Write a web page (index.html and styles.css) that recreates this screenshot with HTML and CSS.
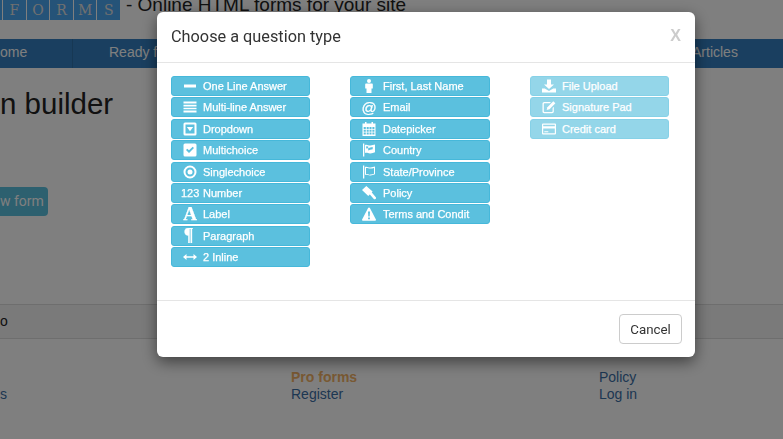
FILE: index.html
```html
<!DOCTYPE html>
<html lang="en">
<head>
    <meta charset="UTF-8">
    <meta name="viewport" content="width=device-width, initial-scale=1.0">
    <title>Online HTML forms for your site</title>
    <link rel="stylesheet" href="styles.css">
</head>
<body>
    <!-- page behind the dialog -->
    <div class="page">
        <header class="site-header">
            <div class="logo">
                <span class="logo-box logo-edge"></span>
                <span class="logo-box">F</span>
                <span class="logo-box">O</span>
                <span class="logo-box">R</span>
                <span class="logo-box">M</span>
                <span class="logo-box">S</span>
            </div>
            <div class="tagline">- Online HTML forms for your site</div>
        </header>

        <nav class="site-nav">
            <a class="nav-home">ome</a>
            <a class="nav-ready">Ready for</a>
            <a class="nav-articles">Articles</a>
        </nav>

        <h1 class="page-title">n builder</h1>
        <a class="new-form">w form</a>

        <div class="table-row">o</div>

        <footer class="site-footer">
            <span></span>
            <a class="pro">Pro forms</a>
            <a>Policy</a>
            <a>s</a>
            <a>Register</a>
            <a>Log in</a>
        </footer>
    </div>

    <div class="backdrop">
        <div class="modal">
            <div class="modal-header">
                <h4>Choose a question type</h4>
                <span class="close">X</span>
            </div>

            <div class="modal-body">
                <div class="type-col">
                    <a class="type-btn">
                        <span class="ico"><svg viewBox="0 0 14 14"><rect x="1" y="5.5" width="12" height="3"/></svg></span>
                        One Line Answer
                    </a>
                    <a class="type-btn">
                        <span class="ico"><svg viewBox="0 0 14 14"><path d="M.5 1.5h13v2H.5zM.5 4.8h13v1.6H.5zM.5 7.7h13v1.6H.5zM.5 10.6h13v2H.5z"/></svg></span>
                        Multi-line Answer
                    </a>
                    <a class="type-btn">
                        <span class="ico"><svg viewBox="0 0 14 14"><path fill-rule="evenodd" d="M2 .5h10A1.5 1.5 0 0 1 13.5 2v10a1.5 1.5 0 0 1-1.5 1.5H2A1.5 1.5 0 0 1 .5 12V2A1.5 1.5 0 0 1 2 .5zM2.5 2.5v9h9v-9z"/><path d="M3.8 5h6.4L7 9.3z"/></svg></span>
                        Dropdown
                    </a>
                    <a class="type-btn">
                        <span class="ico"><svg viewBox="0 0 14 14"><path fill-rule="evenodd" d="M2 .5h10A1.5 1.5 0 0 1 13.5 2v10a1.5 1.5 0 0 1-1.5 1.5H2A1.5 1.5 0 0 1 .5 12V2A1.5 1.5 0 0 1 2 .5zM3 7l1.3-1.3L6 7.3l3.7-3.6L11 5l-5 5z"/></svg></span>
                        Multichoice
                    </a>
                    <a class="type-btn">
                        <span class="ico"><svg viewBox="0 0 14 14"><path fill-rule="evenodd" d="M7 .5a6.5 6.5 0 1 1 0 13 6.5 6.5 0 0 1 0-13zM7 2.5a4.5 4.5 0 1 0 0 9 4.5 4.5 0 0 0 0-9z"/><circle cx="7" cy="7" r="2.5"/></svg></span>
                        Singlechoice
                    </a>
                    <a class="type-btn">
                        <span class="ico ico-text">123</span>
                        Number
                    </a>
                    <a class="type-btn">
                        <span class="ico ico-serif">A</span>
                        Label
                    </a>
                    <a class="type-btn">
                        <span class="ico ico-para">¶</span>
                        Paragraph
                    </a>
                    <a class="type-btn">
                        <span class="ico"><svg viewBox="0 0 14 14"><path d="M0 7l3.5-3v2.2h7V4L14 7l-3.5 3V7.8h-7V10z"/></svg></span>
                        2 Inline
                    </a>
                </div>

                <div class="type-col col-mid">
                    <a class="type-btn">
                        <span class="ico"><svg viewBox="0 0 14 14"><circle cx="7" cy="2" r="2"/><path d="M4 4.6h6a.8.8 0 0 1 .8.8v4.1H9.5V14h-5V9.5H3.2V5.4a.8.8 0 0 1 .8-.8z"/></svg></span>
                        First, Last Name
                    </a>
                    <a class="type-btn">
                        <span class="ico ico-at">@</span>
                        Email
                    </a>
                    <a class="type-btn">
                        <span class="ico"><svg viewBox="0 0 14 14"><path fill-rule="evenodd" d="M3 0h1.5v1.5h5V0H11v1.5h2.500V14H.5V1.500H3zM1.700 5v2h2.100V5zm3 0v2h2V5zm2.800 0v2h2V5zm2.900 0v2h2V5zM1.700 7.800v2h2.100v-2zm3 0v2h2v-2zm2.800 0v2h2v-2zm2.900 0v2h2v-2zM1.700 10.600v2h2.100v-2zm3 0v2h2v-2zm2.800 0v2h2v-2zm2.900 0v2h2v-2z"/></svg></span>
                        Datepicker
                    </a>
                    <a class="type-btn">
                        <span class="ico"><svg viewBox="0 0 14 14"><path fill-rule="evenodd" d="M1 .5h1.300v13H1zM3 2c2-1 3.500.8 5.500.5 1.500-.2 3-.8 4.500-1v7.800c-1.500.3-3 1-4.500 1.200C6.500 10.800 5 9.300 3 10zM4.200 3.300v2.200l2-.2V3.400zM8.200 4.500v2.200l2.500-.4V4.100zM6.200 5.300v2.300l2-.9V4.500z"/></svg></span>
                        Country
                    </a>
                    <a class="type-btn">
                        <span class="ico"><svg viewBox="0 0 14 14"><path fill-rule="evenodd" d="M1 .5h1.300v13H1zM3 2c2-1 3.500.8 5.500.5 1.500-.2 3-.8 4.500-1v7.800c-1.500.3-3 1-4.500 1.200C6.500 10.800 5 9.300 3 10zM4 3v6c1.800-.4 3 1 4.500.6 1-.2 2.300-.6 3.500-.9V2.900c-1 .2-2.300.6-3.500.7C6.800 3.800 5.500 2.600 4 3z"/></svg></span>
                        State/Province
                    </a>
                    <a class="type-btn">
                        <span class="ico"><svg viewBox="0 0 14 14"><path d="M4.300 0l6.300 5.600L6.300 10 0 4zM7 7.500l2-2 4.600 5.500a1.300 1.300 0 0 1-2 1.800z"/></svg></span>
                        Policy
                    </a>
                    <a class="type-btn">
                        <span class="ico"><svg viewBox="0 0 14 14"><path fill-rule="evenodd" d="M7 .5a1 1 0 0 1 .9.5l6 11.500a.8.8 0 0 1-.7 1.200H.8a.8.8 0 0 1-.7-1.200l6-11.500A1 1 0 0 1 7 .5zM6 4.500l.3 5h1.400l.3-5zM6.100 10.500v1.800h1.800v-1.800z"/></svg></span>
                        Terms and Condit
                    </a>
                </div>

                <div class="type-col">
                    <a class="type-btn pro-only">
                        <span class="ico"><svg viewBox="0 0 14 14"><path d="M5 .5h4v5h3L7 10 2 5.500h3zM0 9.500h2.800L7 12l4.200-2.500H14v4H0z"/></svg></span>
                        File Upload
                    </a>
                    <a class="type-btn pro-only">
                        <span class="ico"><svg viewBox="0 0 14 14"><path d="M2.200 2H9L7.800 3.200H2.500a.7.7 0 0 0-.7.7v7.400c0 .4.300.7.700.7h7.400c.4 0 .7-.3.7-.7V8l1.200-1.200v4.700c0 1-.8 1.700-1.700 1.700H2.200c-1 0-1.700-.8-1.700-1.700V3.700C.5 2.800 1.300 2 2.200 2z"/><path d="M11.300 1.200L13.400 3.300 7.500 9.300l-2.800.7.7-2.800z"/></svg></span>
                        Signature Pad
                    </a>
                    <a class="type-btn pro-only">
                        <span class="ico"><svg viewBox="0 0 14 14"><path fill-rule="evenodd" d="M1 1.500h12a1 1 0 0 1 1 1v9a1 1 0 0 1-1 1H1a1 1 0 0 1-1-1v-9a1 1 0 0 1 1-1zM1.200 2.700v1.500h11.600V2.700zM1.200 6.500v4.800h11.600V6.500zM2.300 9.300h4v1h-4z"/></svg></span>
                        Credit card
                    </a>
                </div>
            </div>

            <div class="modal-footer">
                <button class="cancel-btn">Cancel</button>
            </div>
        </div>
    </div>
</body>
</html>
```

FILE: styles.css
```css
* {
    margin: 0;
    padding: 0;
    box-sizing: border-box;
}

html, body {
    height: 100%;
    overflow: hidden;
}

body {
    font-family: "Liberation Sans", Arial, sans-serif;
    font-size: 14px;
    color: #222;
    background: #fff;
}

a {
    color: #3a6ea5;
    text-decoration: none;
}

/* page behind the dialog */
.site-header {
    display: flex;
    height: 39px;
    overflow: hidden;
}

.logo {
    display: flex;
    gap: 1px;
    height: 20px;
    margin-right: 6px;
}

.logo-box {
    width: 22.6px;
    background: #4aa6f0;
    color: #e0e0e0;
    font-family: "DejaVu Serif", serif;
    font-size: 14px;
    line-height: 20px;
    text-align: center;
}

.logo-edge {
    width: 2px;
}

.tagline {
    font-size: 19px;
    line-height: 20px;
    margin-top: -5px;
}

.site-nav {
    display: flex;
    height: 29px;
    background: #347ec0;
    line-height: 27px;
}

.site-nav a {
    color: #fff;
}

.nav-home {
    width: 73px;
    border-right: 1px solid #2f70a8;
}

.nav-ready {
    margin-left: 36px;
    width: 583px;
}

.page-title {
    font-size: 29.5px;
    font-weight: 400;
    line-height: 36px;
    margin-top: 18px;
}

.new-form {
    display: block;
    width: 48px;
    height: 29px;
    margin-top: 65px;
    background: #5bc0de;
    border-radius: 0 4px 4px 0;
    color: #fff;
    font-family: Roboto, sans-serif;
    line-height: 28px;
}

.table-row {
    height: 35px;
    margin-top: 88px;
    border-top: 1px solid #ddd;
    border-bottom: 1px solid #ddd;
    background: #f5f5f5;
    line-height: 32px;
}

.site-footer {
    display: grid;
    grid-template-columns: 291px 308px 1fr;
    grid-auto-rows: 17px;
    padding-top: 30px;
    line-height: 17px;
}

.site-footer .pro {
    color: #f2b266;
    font-weight: 700;
}

/* dialog */
.backdrop {
    position: fixed;
    top: 0;
    left: 0;
    right: 0;
    bottom: 0;
    background: rgba(0, 0, 0, 0.5);
}

.modal {
    width: 538px;
    height: 345px;
    margin: 12px 0 0 157px;
    background: #fff;
    border-radius: 6px;
    box-shadow: 0 5px 15px rgba(0, 0, 0, 0.5);
    display: flex;
    flex-direction: column;
}

.modal-header {
    display: flex;
    align-items: center;
    justify-content: space-between;
    height: 51px;
    padding: 0 14px;
    border-bottom: 1px solid #e5e5e5;
}

.modal-header h4 {
    font-family: Roboto, sans-serif;
    font-size: 16.3px;
    font-weight: 400;
    color: #333;
    margin-bottom: 2px;
}

.close {
    color: #ccc;
    font-size: 16px;
    font-weight: 700;
    margin-bottom: 2px;
}

.modal-body {
    flex: 1;
    display: grid;
    grid-template-columns: 139px 140px 139px;
    column-gap: 40px;
    align-content: start;
    padding: 13px 14px 0;
}

.type-col {
    display: flex;
    flex-direction: column;
    gap: 1.4px;
}

.type-btn {
    display: flex;
    align-items: center;
    height: 20px;
    padding-left: 8px;
    background: #5bc0de;
    border: 1px solid #46b8da;
    border-radius: 3px;
    color: #fff;
    font-size: 11px;
    -webkit-text-stroke: 0.25px #fff;
    white-space: nowrap;
}

.pro-only {
    opacity: 0.65;
}

.ico {
    display: flex;
    align-items: center;
    justify-content: center;
    width: 20px;
    height: 14px;
    margin-right: 3px;
    flex-shrink: 0;
}

.col-mid .ico {
    margin-right: 4px;
}

.ico svg {
    width: 14px;
    height: 14px;
    fill: #fff;
}

.ico-text {
    justify-content: flex-start;
    padding-left: 1px;
}

.ico-serif {
    font-family: "Liberation Serif", serif;
    font-size: 19px;
    font-weight: 700;
}

.ico-para {
    font-family: "Liberation Serif", serif;
    font-size: 18px;
    font-weight: 700;
    padding-right: 3px;
}

.ico-at {
    font-size: 15px;
}

.modal-footer {
    display: flex;
    justify-content: flex-end;
    align-items: flex-start;
    height: 57px;
    padding: 13px 13px 0 0;
    border-top: 1px solid #e5e5e5;
}

.cancel-btn {
    width: 63px;
    height: 30px;
    background: #fff;
    border: 1px solid #ccc;
    border-radius: 4px;
    color: #333;
    font-family: Roboto, sans-serif;
    font-size: 13.3px;
}
```
